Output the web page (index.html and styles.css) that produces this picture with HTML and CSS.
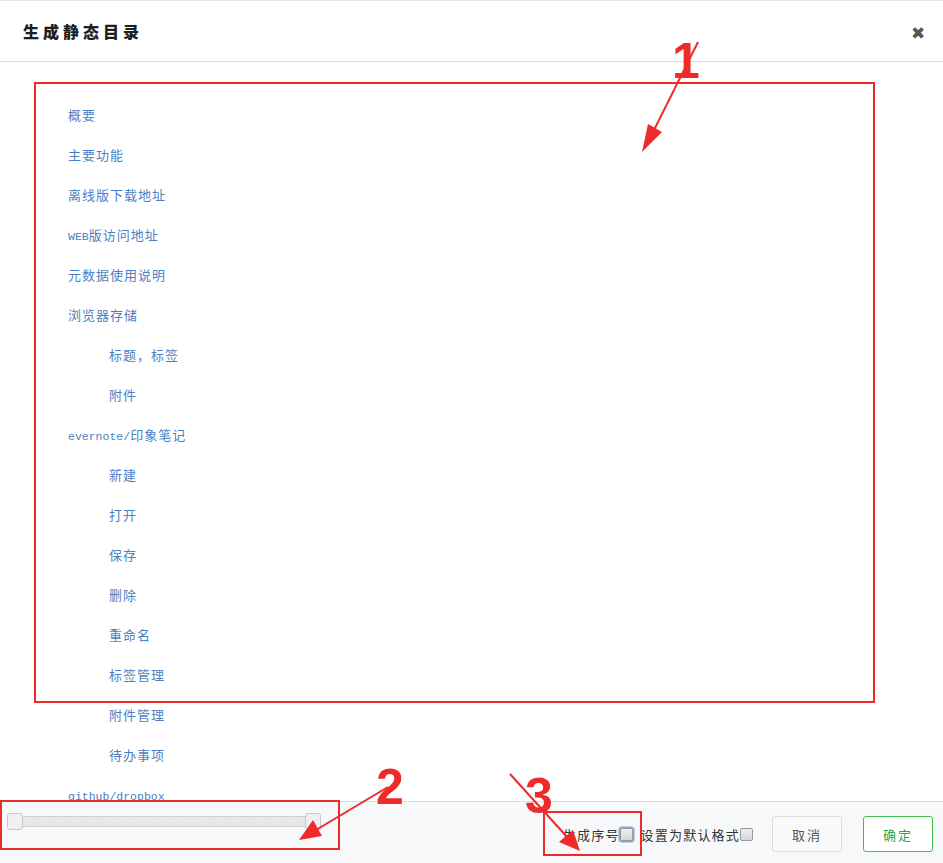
FILE: index.html
```html
<!DOCTYPE html>
<html lang="zh">
<head>
<meta charset="utf-8">
<title>生成静态目录</title>
<link rel="stylesheet" href="styles.css">
</head>
<body>
<div class="dialog">
  <div class="header">
    <h1 class="title">生成静态目录</h1>
    <span class="close">✖</span>
  </div>
  <div class="content">
    <ul class="toc">
      <li>概要</li>
      <li>主要功能</li>
      <li>离线版下载地址</li>
      <li><span class="latin">WEB</span>版访问地址</li>
      <li>元数据使用说明</li>
      <li>浏览器存储</li>
      <li class="sub">标题，标签</li>
      <li class="sub">附件</li>
      <li><span class="latin">evernote/</span>印象笔记</li>
      <li class="sub">新建</li>
      <li class="sub">打开</li>
      <li class="sub">保存</li>
      <li class="sub">删除</li>
      <li class="sub">重命名</li>
      <li class="sub">标签管理</li>
      <li class="sub">附件管理</li>
      <li class="sub">待办事项</li>
      <li><span class="latin">github/dropbox</span></li>
    </ul>
  </div>
  <div class="footer">
    <div class="slider">
      <span class="thumb"></span>
      <span class="track"></span>
      <span class="thumb"></span>
    </div>
    <div class="options">
      <label class="opt">生成序号<span class="check focused"></span></label>
      <label class="opt">设置为默认格式<span class="check"></span></label>
    </div>
    <button class="btn cancel">取消</button>
    <button class="btn ok">确定</button>
  </div>

  <div class="box box1"></div>
  <div class="box box2"></div>
  <div class="box box3"></div>
  <span class="num num1">1</span>
  <span class="num num2">2</span>
  <span class="num num3">3</span>
  <svg class="arrows" width="943" height="863" viewBox="0 0 943 863">
    <g stroke="#ee2a2a" stroke-width="2" fill="#ee2a2a">
      <line x1="698" y1="42" x2="652" y2="134"/>
      <polygon points="642,152 648,124 662,132" stroke="none"/>
      <line x1="388" y1="787" x2="316" y2="830"/>
      <polygon points="299,840 313,820 322,836" stroke="none"/>
      <line x1="510" y1="774" x2="568" y2="838"/>
      <polygon points="580,851 559,842 573,830" stroke="none"/>
    </g>
  </svg>
</div>
</body>
</html>
```
FILE: styles.css
```css
* { box-sizing: border-box; }
html, body { margin: 0; padding: 0; background: #fff; }
body {
  font-family: "Noto Sans CJK SC", "Noto Sans", sans-serif;
  color: #333;
}
.dialog {
  position: relative;
  width: 943px;
  height: 863px;
  display: flex;
  flex-direction: column;
  overflow: hidden;
}
.header {
  height: 62px;
  border-top: 1px solid #e6e6e6;
  border-bottom: 1px solid #dcdcdc;
  display: flex;
  align-items: center;
  justify-content: space-between;
  padding: 0 18px 0 23px;
  flex-shrink: 0;
}
.title {
  margin: 0;
  font-size: 16px;
  font-weight: 900;
  letter-spacing: 4px;
  color: #1e1e1e;
}
.close {
  font-size: 17px;
  color: #555;
  line-height: 1;
}
.content {
  flex: 1;
  overflow: hidden;
  padding: 33px 0 0 68px;
}
.toc {
  list-style: none;
  margin: 0;
  padding: 0;
}
.toc li {
  height: 40px;
  line-height: 40px;
  font-size: 13px;
  letter-spacing: 1px;
  color: #4a7fc4;
  white-space: nowrap;
}
.toc li.sub { padding-left: 41px; }
.latin {
  font-family: "Liberation Mono", monospace;
  font-size: 11.5px;
  letter-spacing: 0;
}
.footer {
  height: 62px;
  flex-shrink: 0;
  border-top: 1px solid #dcdcdc;
  background: #f7f8fa;
  display: flex;
  align-items: flex-start;
  padding: 0 10px 0 7px;
}
.slider {
  display: flex;
  align-items: center;
  width: 314px;
  margin-top: 11px;
}
.thumb {
  width: 16px;
  height: 17px;
  border: 1px solid #c8c8c8;
  border-radius: 3px;
  background: #f0f0f0;
  flex-shrink: 0;
}
.track {
  flex: 1;
  height: 11px;
  border-top: 1px solid #d2d2d2;
  border-bottom: 1px solid #d2d2d2;
  background: repeating-linear-gradient(45deg, #e6e6e6 0 2px, #ece8e8 2px 4px);
}
.options {
  display: flex;
  align-items: center;
  margin-left: auto;
  margin-top: 23px;
  gap: 8px;
}
.opt {
  display: flex;
  align-items: center;
  font-size: 13px;
  letter-spacing: 1.2px;
  color: #333;
}
.check {
  width: 13px;
  height: 13px;
  border: 1px solid #999;
  border-radius: 2px;
  background: linear-gradient(#eee, #d8d8d8);
}
.check.focused {
  box-shadow: 0 0 0 1.5px #7fa7dd;
}
.btn {
  font-family: "Noto Sans CJK SC", sans-serif;
  font-size: 13px;
  letter-spacing: 2px;
  width: 70px;
  height: 36px;
  border-radius: 3px;
  margin-top: 14px;
  background: #fafafa;
  cursor: pointer;
}
.cancel {
  margin-left: 19px;
  border: 1px solid #dcdcdc;
  color: #555;
}
.ok {
  margin-left: 21px;
  border: 1px solid #3fbf4f;
  color: #2fa33f;
  background: #fff;
}
.box {
  position: absolute;
  border: 2px solid #ee2a2a;
}
.box1 { left: 34px; top: 82px; width: 841px; height: 621px; }
.box2 { left: 0; top: 800px; width: 340px; height: 50px; }
.box3 { left: 543px; top: 811px; width: 99px; height: 45px; }
.num {
  position: absolute;
  font-family: "Liberation Sans", sans-serif;
  font-weight: bold;
  font-size: 50px;
  line-height: 1;
  color: #ee2a2a;
}
.num1 { left: 672px; top: 36px; }
.num2 { left: 376px; top: 762px; }
.num3 { left: 525px; top: 771px; }
.arrows {
  position: absolute;
  left: 0;
  top: 0;
  pointer-events: none;
}
```
